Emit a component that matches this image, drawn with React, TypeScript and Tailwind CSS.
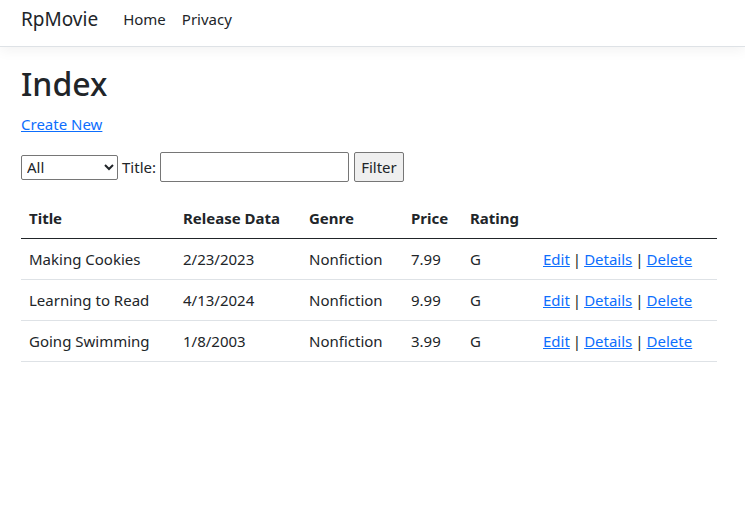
import React from "react";

const rows = [
  { title: "Making Cookies", date: "2/23/2023", genre: "Nonfiction", price: "7.99", rating: "G" },
  { title: "Learning to Read", date: "4/13/2024", genre: "Nonfiction", price: "9.99", rating: "G" },
  { title: "Going Swimming", date: "1/8/2003", genre: "Nonfiction", price: "3.99", rating: "G" },
];

export default function App() {
  return (
    <div className="min-h-[523px] bg-white text-[#212529] text-[16px] leading-[24px]" style={{ fontFamily: '"Noto Sans", "Open Sans", sans-serif' }}>
      <nav className="h-[47px] border-b border-[#dee2e6] shadow-[0_4px_12px_rgba(0,0,0,0.05)] flex items-center px-[21px]">
        <span className="text-[19px] mr-[25px] -mt-[8px]">RpMovie</span>
        <div className="flex gap-[16px] -mt-[8px] text-[15px]">
          <span>Home</span>
          <span>Privacy</span>
        </div>
      </nav>
      <main className="px-[21px]">
        <h1 className="text-[32px] font-medium leading-[40px] mt-[17px] mb-[8px]">Index</h1>
        <p className="mb-[16px] text-[15px]">
          <a href="#" className="text-[#0d6efd] underline">Create New</a>
        </p>
        <form className="mb-[16px] flex items-center h-[30px] text-[15px]">
          <select className="w-[97px] h-[25px] border border-[#767676] rounded-[2px] text-[15px] px-[1px] bg-white">
            <option>All</option>
          </select>
          <span className="ml-[4px] mr-[4px]">Title:</span>
          <input className="w-[189px] h-[30px] border border-[#767676] rounded-[2px]" />
          <button type="button" className="ml-[5px] w-[50px] h-[30px] border border-[#767676] rounded-[2px] bg-[#efefef] text-[15px]">Filter</button>
        </form>
        <table className="w-[696px] border-collapse text-[15px]">
          <thead>
            <tr className="border-b border-[#212529]">
              <th className="text-left font-bold px-[8px] py-[8px] w-[154px]">Title</th>
              <th className="text-left font-bold px-[8px] py-[8px] w-[126px]">Release Data</th>
              <th className="text-left font-bold px-[8px] py-[8px] w-[102px]">Genre</th>
              <th className="text-left font-bold px-[8px] py-[8px] w-[59px]">Price</th>
              <th className="text-left font-bold px-[8px] py-[8px] w-[73px]">Rating</th>
              <th className="px-[8px] py-[8px]"></th>
            </tr>
          </thead>
          <tbody>
            {rows.map((r) => (
              <tr key={r.title} className="border-b border-[#dee2e6]">
                <td className="px-[8px] py-[8px]">{r.title}</td>
                <td className="px-[8px] py-[8px]">{r.date}</td>
                <td className="px-[8px] py-[8px]">{r.genre}</td>
                <td className="px-[8px] py-[8px]">{r.price}</td>
                <td className="px-[8px] py-[8px]">{r.rating}</td>
                <td className="px-[8px] py-[8px]">
                  <a href="#" className="text-[#0d6efd] underline">Edit</a>
                  <span className="mx-[3px]">|</span>
                  <a href="#" className="text-[#0d6efd] underline">Details</a>
                  <span className="mx-[3px]">|</span>
                  <a href="#" className="text-[#0d6efd] underline">Delete</a>
                </td>
              </tr>
            ))}
          </tbody>
        </table>
      </main>
    </div>
  );
}
